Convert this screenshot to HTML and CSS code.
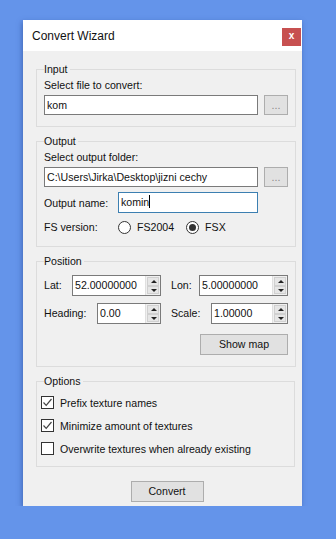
FILE: index.html
```html
<!DOCTYPE html>
<html lang="en">
<head>
    <meta charset="UTF-8">
    <title>Convert Wizard</title>
    <link rel="stylesheet" href="styles.css">
</head>
<body>
    <div class="window">
        <div class="titlebar">
            <span class="title">Convert Wizard</span>
            <span class="close">x</span>
        </div>

        <div class="content">
            <fieldset class="group group-input">
                <legend>Input</legend>
                <div class="label">Select file to convert:</div>
                <div class="file-row">
                    <div class="textbox wide">kom</div>
                    <div class="btn browse">...</div>
                </div>
            </fieldset>

            <fieldset class="group group-output">
                <legend>Output</legend>
                <div class="label">Select output folder:</div>
                <div class="file-row">
                    <div class="textbox wide">C:\Users\Jirka\Desktop\jizni cechy</div>
                    <div class="btn browse">...</div>
                </div>
                <div class="field-row name-row">
                    <span class="row-label">Output name:</span>
                    <div class="textbox name focused">komin<span class="caret"></span></div>
                </div>
                <div class="field-row fs-row">
                    <span class="row-label">FS version:</span>
                    <span class="radio"></span><span class="radio-text">FS2004</span>
                    <span class="radio checked"></span><span class="radio-text">FSX</span>
                </div>
            </fieldset>

            <fieldset class="group group-position">
                <legend>Position</legend>
                <div class="pos-row">
                    <span class="pos-label lat">Lat:</span>
                    <div class="spin w-lat">52.00000000<span class="spin-btns"><i class="up"></i><i class="down"></i></span></div>
                    <span class="pos-label lon">Lon:</span>
                    <div class="spin w-lon">5.00000000<span class="spin-btns"><i class="up"></i><i class="down"></i></span></div>
                </div>
                <div class="pos-row">
                    <span class="pos-label heading">Heading:</span>
                    <div class="spin w-heading">0.00<span class="spin-btns"><i class="up"></i><i class="down"></i></span></div>
                    <span class="pos-label scale">Scale:</span>
                    <div class="spin w-scale">1.00000<span class="spin-btns"><i class="up"></i><i class="down"></i></span></div>
                </div>
                <div class="map-row">
                    <div class="btn show-map">Show map</div>
                </div>
            </fieldset>

            <fieldset class="group group-options">
                <legend>Options</legend>
                <div class="check-row">
                    <span class="checkbox"><svg width="11" height="11" viewBox="0 0 11 11"><polyline points="1.5,5.5 4.2,8.3 9.5,2" fill="none" stroke="#444" stroke-width="1.2"/></svg></span>
                    <span>Prefix texture names</span>
                </div>
                <div class="check-row">
                    <span class="checkbox"><svg width="11" height="11" viewBox="0 0 11 11"><polyline points="1.5,5.5 4.2,8.3 9.5,2" fill="none" stroke="#444" stroke-width="1.2"/></svg></span>
                    <span>Minimize amount of textures</span>
                </div>
                <div class="check-row">
                    <span class="checkbox"></span>
                    <span>Overwrite textures when already existing</span>
                </div>
            </fieldset>

            <div class="footer">
                <div class="btn convert">Convert</div>
            </div>
        </div>
    </div>
</body>
</html>
```

FILE: styles.css
```css
* {
    box-sizing: border-box;
}

body {
    margin: 0;
    background-color: #6494ea;
    font-family: 'Liberation Sans', Arial, sans-serif;
    font-size: 10.6px;
    color: #111;
}

.window {
    margin: 20px 0 0 23px;
    width: 279px;
    height: 486px;
    background-color: #f0f0f0;
    box-shadow: -1px 2px 5px rgba(40, 70, 140, 0.55);
}

.titlebar {
    height: 31px;
    background-color: #fff;
    display: flex;
    justify-content: space-between;
    padding-left: 9px;
}

.title {
    font-size: 12px;
    line-height: 32px;
}

.close {
    margin-top: 8px;
    margin-right: 1px;
    width: 19px;
    height: 18px;
    background-color: #c75050;
    color: #fff;
    font-weight: bold;
    font-size: 10px;
    text-align: center;
    line-height: 16px;
}

.content {
    padding: 12px 7px 0 13px;
}

.group {
    margin: 0 0 8px;
    border: 1px solid #dcdcdc;
    padding: 3px 7px 11px 7px;
}

.group legend {
    padding: 0 2px 0 0;
    line-height: 13px;
}

.label {
    line-height: 13px;
}

.file-row {
    display: flex;
    align-items: center;
    margin-top: 3px;
}

.textbox {
    height: 20px;
    border: 1px solid #7a7a7a;
    background-color: #fff;
    padding: 0 2px;
    line-height: 18px;
    white-space: nowrap;
    overflow: hidden;
}

.textbox.wide {
    width: 214px;
}

.textbox.focused {
    border-color: #3c7fb1;
}

.caret {
    display: inline-block;
    width: 1px;
    height: 13px;
    background-color: #000;
    vertical-align: -2px;
}

.btn {
    background-color: #e1e1e1;
    border: 1px solid #adadad;
    text-align: center;
}

.browse {
    margin-left: 6px;
    width: 24px;
    height: 20px;
    line-height: 18px;
    color: #888;
}

.field-row {
    display: flex;
    align-items: center;
}

.row-label {
    width: 74px;
}

.name-row {
    margin-top: 5px;
}

.textbox.name {
    width: 140px;
    height: 21px;
    line-height: 19px;
}

.fs-row {
    margin-top: 6px;
    height: 16px;
}

.radio {
    width: 13px;
    height: 13px;
    border: 1px solid #333;
    border-radius: 50%;
    background-color: #fff;
    position: relative;
}

.radio.checked::after {
    content: "";
    position: absolute;
    left: 2px;
    top: 2px;
    width: 7px;
    height: 7px;
    border-radius: 50%;
    background-color: #333;
}

.radio-text {
    margin-left: 6px;
    margin-right: 12px;
}

.pos-row {
    display: flex;
    align-items: center;
    margin-top: 4px;
}

.pos-row + .pos-row {
    margin-top: 7px;
}

.pos-label {
    line-height: 13px;
}

.lat { width: 28px; }
.heading { width: 53px; }
.lon { margin-left: 10px; width: 28px; }
.scale { margin-left: 10px; width: 40px; }

.spin {
    display: flex;
    justify-content: space-between;
    height: 21px;
    border: 1px solid #7a7a7a;
    background-color: #fff;
    padding-left: 2px;
    line-height: 19px;
}

.w-lat { width: 89px; }
.w-heading { width: 64px; }
.w-lon { width: 89px; }
.w-scale { width: 77px; }

.spin-btns {
    display: flex;
    flex-direction: column;
    width: 15px;
    background-color: #f0f0f0;
    border-left: 1px solid #e0e0e0;
    padding: 1px;
}

.spin-btns i {
    flex: 1;
    position: relative;
    background-color: #e6e6e6;
    border: 1px solid #d0d0d0;
}

.spin-btns i::after {
    content: "";
    position: absolute;
    left: 3px;
    top: 2px;
    border-left: 3px solid transparent;
    border-right: 3px solid transparent;
}

.spin-btns .up::after {
    border-bottom: 3px solid #222;
}

.spin-btns .down::after {
    border-top: 3px solid #222;
}

.map-row {
    display: flex;
    justify-content: flex-end;
    margin-top: 10px;
}

.show-map {
    width: 88px;
    height: 21px;
    line-height: 19px;
}

.check-row {
    display: flex;
    align-items: center;
    height: 13px;
}

.group-options .check-row:first-of-type {
    margin-top: 5px;
}

.check-row + .check-row {
    margin-top: 10px;
}

.checkbox {
    width: 13px;
    height: 13px;
    border: 1px solid #333;
    background-color: #fff;
    margin-left: -3px;
    margin-right: 6px;
    display: flex;
    align-items: center;
    justify-content: center;
}

.footer {
    display: flex;
    justify-content: center;
    margin-top: 14px;
}

.convert {
    width: 73px;
    height: 21px;
    line-height: 19px;
    margin-left: 3px;
}
```
